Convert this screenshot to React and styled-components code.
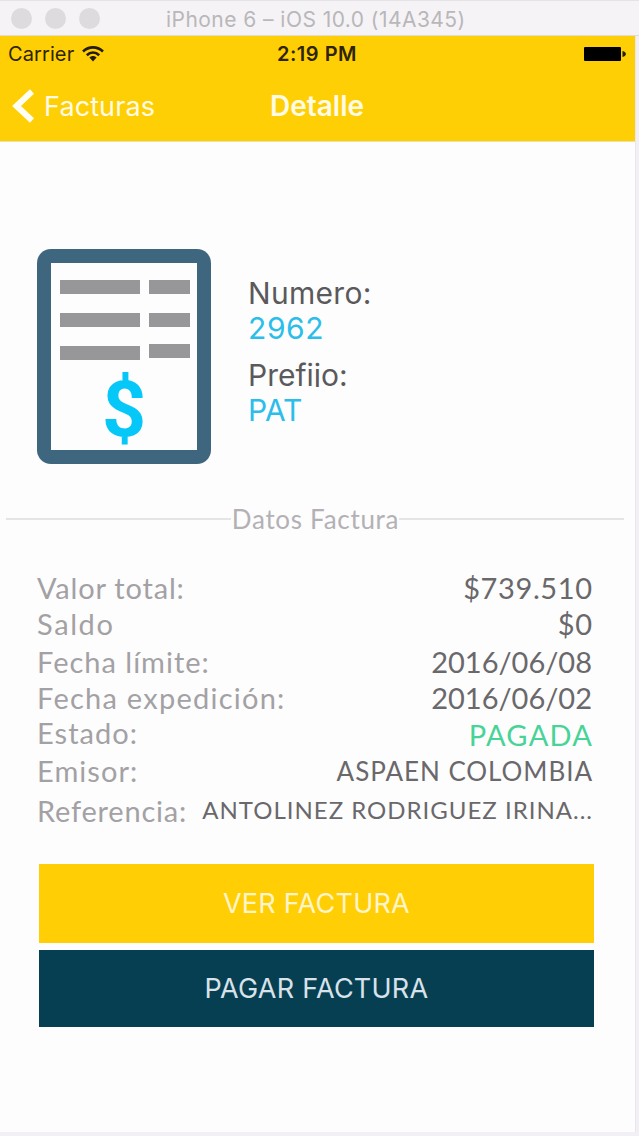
import React from "react";
import styled, { createGlobalStyle } from "styled-components";

const GlobalStyle = createGlobalStyle`
  * {
    box-sizing: border-box;
  }
  body {
    margin: 0;
    background: #f2f0f5;
  }
`;

const Simulator = styled.div`
  width: 639px;
  height: 1136px;
  overflow: hidden;
  background: #f2f0f5;
  font-family: Inter, "Liberation Sans", sans-serif;
`;

const TitleBar = styled.div`
  display: flex;
  align-items: center;
  height: 36px;
  padding: 0 11px;
  background: #f5f3f6;
  border-top: 1px solid #e6e3e6;
  border-bottom: 1px solid #e3dcc8;
`;
const Lights = styled.div`
  display: flex;
  gap: 13px;
  width: 155px;
`;
const Light = styled.span`
  width: 21px;
  height: 21px;
  border-radius: 50%;
  background: #dddbde;
`;
const WindowTitle = styled.span`
  padding-top: 2px;
  font-size: 21px;
  letter-spacing: 0.45px;
  white-space: nowrap;
  color: #b9b7ba;
`;

const Screen = styled.div`
  width: 636px;
  height: 1096px;
  background: #fdfdfe;
  border-right: 1px solid #e9e6ed;
`;

const Header = styled.header`
  height: 106px;
  background: #ffcf05;
  border-bottom: 1px solid #eadfae;
`;
const StatusBar = styled.div`
  display: grid;
  grid-template-columns: 1fr auto 1fr;
  align-items: center;
  height: 35px;
  padding: 0 9px 0 8px;
  color: #2e2500;
`;
const Carrier = styled.div`
  display: flex;
  align-items: center;
  gap: 8px;
  font-size: 20px;
  letter-spacing: 0.1px;
`;
const Clock = styled.span`
  font-size: 20px;
  font-weight: 600;
  letter-spacing: 0.5px;
`;
const Battery = styled.svg`
  justify-self: end;
`;

const NavBar = styled.nav`
  display: grid;
  grid-template-columns: 1fr auto 1fr;
  align-items: center;
  height: 70px;
  padding: 0 12px 0 11px;
  color: #fffbe6;
`;
const Back = styled.div`
  display: flex;
  align-items: center;
  gap: 9px;
  font-size: 27px;
  letter-spacing: 0.1px;
`;
const NavTitle = styled.span`
  font-size: 28px;
  font-weight: 600;
`;

const Summary = styled.section`
  display: flex;
  gap: 37px;
  height: 326px;
  padding: 107px 0 0 37px;
`;
const SummaryInfo = styled.div`
  padding-top: 26px;
`;
const Label = styled.div`
  height: 30px;
  margin-bottom: 2px;
  line-height: 36px;
  font-size: 30px;
  letter-spacing: ${(p) => p.$spacing || 0}px;
  color: #5b595b;
  overflow: ${(p) => (p.$clip ? "hidden" : "visible")};
`;
const Value = styled.div`
  height: 50px;
  line-height: 42px;
  font-size: 30px;
  letter-spacing: ${(p) => p.$spacing || 0}px;
  color: #2cbdea;
`;

const Divider = styled.div`
  display: flex;
  align-items: center;
  height: 102px;
  padding: 0 11px 0 6px;
  font-family: Lato, sans-serif;
  font-size: 26px;
  color: #b3b1b4;
`;
const Rule = styled.span`
  flex: 1;
  height: 2px;
  background: #e6e4e7;
`;
const DividerText = styled.span`
  padding-left: 1px;
  letter-spacing: 0.7px;
`;

const Row = styled.div`
  display: flex;
  justify-content: space-between;
  height: ${(p) => p.$height}px;
  padding: 0 43px 0 37px;
  font-family: Lato, sans-serif;
  white-space: nowrap;
`;
const Name = styled.span`
  line-height: 36px;
  font-size: 29px;
  letter-spacing: ${(p) => p.$spacing}px;
  color: #a3a1a4;
`;
const Data = styled.span`
  line-height: ${(p) => p.$line || 36}px;
  font-size: ${(p) => p.$size || 29}px;
  letter-spacing: ${(p) => p.$spacing || 0}px;
  margin-right: -${(p) => p.$spacing || 0}px;
  color: ${(p) => p.$color || "#6a686b"};
`;

const Actions = styled.div`
  display: flex;
  flex-direction: column;
  gap: 7px;
  padding: 31px 41px 0 39px;
`;
const Button = styled.button`
  height: ${(p) => p.$height}px;
  padding: 0;
  border: none;
  font-family: inherit;
  font-size: 27px;
  letter-spacing: 0.25px;
  color: ${(p) => p.$color};
  background: ${(p) => p.$bg};
`;

const rows = [
  { name: "Valor total:", height: 36, spacing: 0.8, data: "$739.510", dataSpacing: 0.6 },
  { name: "Saldo", height: 38, spacing: 1.6, data: "$0", dataSpacing: 0.6 },
  { name: "Fecha límite:", height: 36, spacing: 1, data: "2016/06/08", dataSpacing: 0 },
  { name: "Fecha expedición:", height: 35, spacing: 1.25, data: "2016/06/02", dataSpacing: 0 },
  { name: "Estado:", height: 38, spacing: 1.05, data: "PAGADA", dataSpacing: 1.3, line: 40, color: "#48d397" },
  { name: "Emisor:", height: 40, spacing: 1.05, data: "ASPAEN COLOMBIA", dataSpacing: 0.95, size: 26, line: 37 },
  { name: "Referencia:", height: 40, spacing: 0.8, data: "ANTOLINEZ RODRIGUEZ IRINA...", dataSpacing: 1, size: 24, line: 34 },
];

const WifiIcon = () => (
  <svg width="22" height="16" viewBox="0 0 22 16" fill="none" stroke="#241d00">
    <path d="M1 5.400C7 0 15 0 21 5.400" strokeWidth="2.700" />
    <path d="M4.800 9.200C8.500 5.800 13.500 5.800 17.200 9.200" strokeWidth="2.700" />
    <path d="M7.400 11.600C9.500 9.600 12.500 9.600 14.600 11.600L11 15.500Z" fill="#241d00" stroke="none" />
  </svg>
);

const InvoiceIcon = () => (
  <svg width="174" height="215" viewBox="0 0 174 215">
    <rect width="174" height="215" rx="14" fill="#3f667f" />
    <rect x="14" y="14" width="146" height="187" fill="#fdfdfe" />
    <g fill="#979698">
      <rect x="23" y="31" width="80" height="14" />
      <rect x="112" y="31" width="41" height="14" />
      <rect x="23" y="64" width="80" height="14" />
      <rect x="112" y="64" width="41" height="14" />
      <rect x="23" y="97" width="80" height="14" />
      <rect x="112" y="95" width="41" height="14" />
    </g>
    <text
      x="87"
      y="187"
      textAnchor="middle"
      fontFamily="Roboto, sans-serif"
      fontWeight="700"
      fontSize="77"
      fill="#06c8f8"
    >
      $
    </text>
  </svg>
);

const App = () => {
  return (
    <Simulator>
      <GlobalStyle />
      <TitleBar>
        <Lights>
          <Light />
          <Light />
          <Light />
        </Lights>
        <WindowTitle>iPhone 6 – iOS 10.0 (14A345)</WindowTitle>
      </TitleBar>
      <Screen>
        <Header>
          <StatusBar>
            <Carrier>
              Carrier
              <WifiIcon />
            </Carrier>
            <Clock>2:19 PM</Clock>
            <Battery width="42" height="14" viewBox="0 0 42 14">
              <rect width="37" height="14" rx="1" fill="#000" />
              <path d="M38.500 4C43 5 43 9 38.500 10Z" fill="#241d00" />
            </Battery>
          </StatusBar>
          <NavBar>
            <Back>
              <svg width="24" height="34" viewBox="0 0 24 34" fill="none">
                <path d="M21 2.500L5.500 17L21 31.500" stroke="#fffef5" strokeWidth="6" />
              </svg>
              Facturas
            </Back>
            <NavTitle>Detalle</NavTitle>
          </NavBar>
        </Header>
        <Summary>
          <InvoiceIcon />
          <SummaryInfo>
            <Label $spacing={0.3}>Numero:</Label>
            <Value $spacing={0.6}>2962</Value>
            <Label $clip>Prefijo:</Label>
            <Value>PAT</Value>
          </SummaryInfo>
        </Summary>
        <Divider>
          <Rule />
          <DividerText>Datos Factura</DividerText>
          <Rule />
        </Divider>
        {rows.map((row) => (
          <Row key={row.name} $height={row.height}>
            <Name $spacing={row.spacing}>{row.name}</Name>
            <Data
              $spacing={row.dataSpacing}
              $size={row.size}
              $line={row.line}
              $color={row.color}
            >
              {row.data}
            </Data>
          </Row>
        ))}
        <Actions>
          <Button $height={79} $bg="#ffce05" $color="#fff5cc">
            VER FACTURA
          </Button>
          <Button $height={77} $bg="#063f52" $color="#d9e2ea">
            PAGAR FACTURA
          </Button>
        </Actions>
      </Screen>
    </Simulator>
  );
};

export default App;
